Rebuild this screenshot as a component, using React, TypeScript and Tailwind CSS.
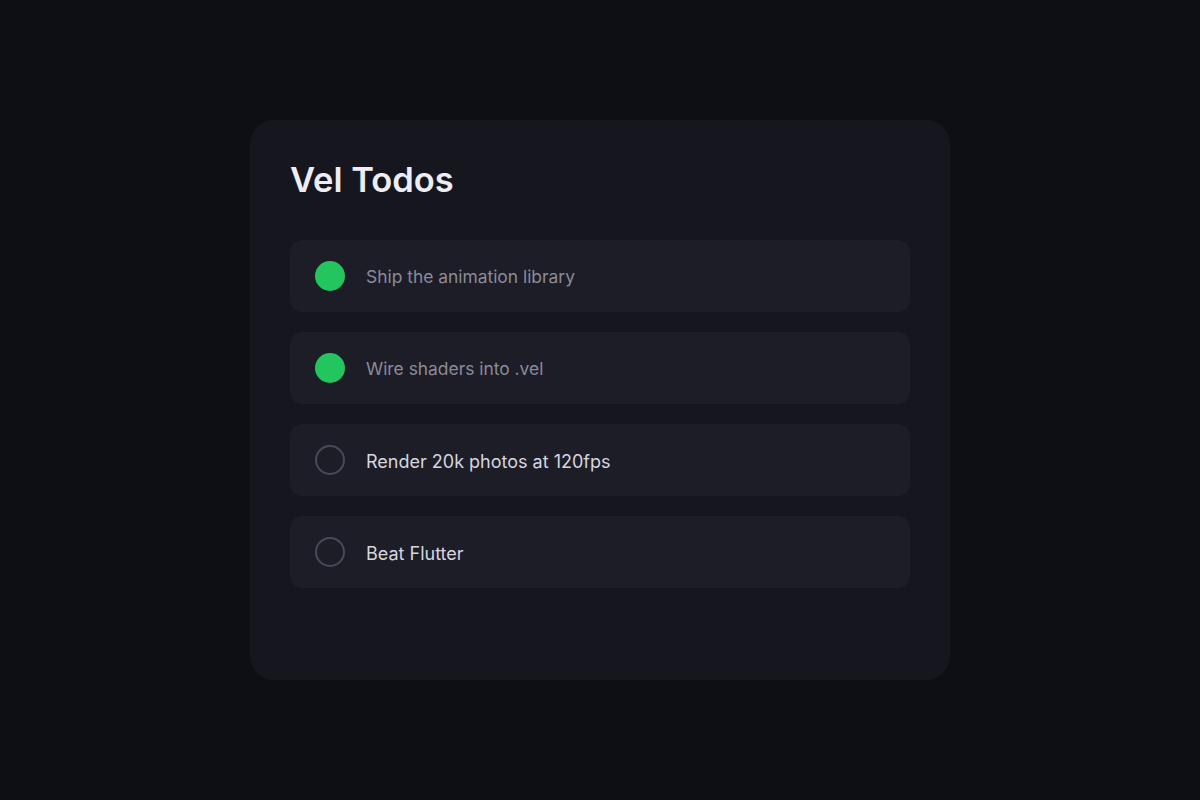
import React from 'react';

type Todo = { id: number; text: string; done: boolean };

const todos: Todo[] = [
  { id: 1, text: 'Ship the animation library', done: true },
  { id: 2, text: 'Wire shaders into .vel', done: true },
  { id: 3, text: 'Render 20k photos at 120fps', done: false },
  { id: 4, text: 'Beat Flutter', done: false },
];

const TodoRow: React.FC<{ todo: Todo }> = ({ todo }) => (
  <div className="flex h-[72px] items-center gap-[21px] rounded-xl bg-[#1d1d28] pl-[25px] pr-6">
    {todo.done ? (
      <div className="h-[30px] w-[30px] shrink-0 rounded-full bg-[#22c55e]" />
    ) : (
      <div className="h-[30px] w-[30px] shrink-0 rounded-full border-2 border-[#4a4a56]" />
    )}
    <span className={`pt-[2px] ${todo.done ? 'text-[17.4px] text-[#8b8b97]' : 'text-[18px] text-[#d6d6de]'}`}>
      {todo.text}
    </span>
  </div>
);

export default function App() {
  return (
    <div
      className="flex min-h-screen items-start justify-center bg-[#0e0e15] pt-[120px]"
      style={{ fontFamily: 'Inter, "Noto Sans", sans-serif' }}
    >
      <div className="flex h-[560px] w-[700px] flex-col rounded-3xl bg-[#16161f] p-10">
        <h1 className="mb-10 text-[34.5px] font-semibold leading-10 text-[#ededf3]">Vel Todos</h1>
        <div className="flex flex-col gap-5">
          {todos.map((t) => (
            <TodoRow key={t.id} todo={t} />
          ))}
        </div>
      </div>
    </div>
  );
}
